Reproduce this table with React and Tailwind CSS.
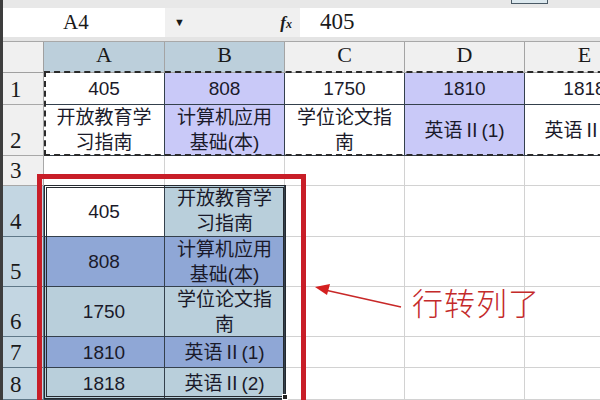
import clsx from 'clsx';

const COLS = ['w-[121px]', 'w-[120px]', 'w-[120px]', 'w-[120px]', 'w-[120px]'];

const LAV = 'bg-[#c9c9f8]';
const PALE = 'bg-[#b9cfdb]';
const BLUE = 'bg-[#8fa7d6]';

const rows = [
  {
    n: '1',
    h: 'h-[32px]',
    head: 'bg-[#f0f0f0]',
    dark: [0, 1, 2, 3, 4],
    cells: [
      { t: '405' },
      { t: '808', bg: LAV },
      { t: '1750' },
      { t: '1810', bg: LAV },
      { t: '1818' },
    ],
  },
  {
    n: '2',
    h: 'h-[51px]',
    head: 'bg-[#f0f0f0]',
    dark: [0, 1, 2, 3, 4],
    cells: [
      { t: ['开放教育学', '习指南'] },
      { t: ['计算机应用', '基础(本)'], bg: LAV },
      { t: ['学位论文指', '南'] },
      { t: '英语Ⅱ(1)', bg: LAV },
      { t: '英语Ⅱ(2)' },
    ],
  },
  { n: '3', h: 'h-[30px]', head: 'bg-[#f0f0f0]', dark: [], cells: [{}, {}, {}, {}, {}] },
  {
    n: '4',
    h: 'h-[51px]',
    head: 'bg-[#c3d6e2]',
    dark: [0, 1],
    cells: [{ t: '405', bg: 'bg-white' }, { t: ['开放教育学', '习指南'], bg: PALE }, {}, {}, {}],
  },
  {
    n: '5',
    h: 'h-[50px]',
    head: 'bg-[#c3d6e2]',
    dark: [0, 1],
    cells: [{ t: '808', bg: BLUE }, { t: ['计算机应用', '基础(本)'], bg: BLUE }, {}, {}, {}],
  },
  {
    n: '6',
    h: 'h-[50px]',
    head: 'bg-[#c3d6e2]',
    dark: [0, 1],
    cells: [{ t: '1750', bg: PALE }, { t: ['学位论文指', '南'], bg: PALE }, {}, {}, {}],
  },
  {
    n: '7',
    h: 'h-[31px]',
    head: 'bg-[#c3d6e2]',
    dark: [0, 1],
    cells: [{ t: '1810', bg: BLUE }, { t: '英语Ⅱ(1)', bg: BLUE }, {}, {}, {}],
  },
  {
    n: '8',
    h: 'h-[32px]',
    head: 'bg-[#c3d6e2]',
    dark: [0, 1],
    cells: [{ t: '1818', bg: PALE }, { t: '英语Ⅱ(2)', bg: PALE }, {}, {}, {}],
  },
];

function Cell({ cell, width, dark }) {
  const text = cell.t;
  return (
    <div
      className={clsx(
        'flex shrink-0 flex-col items-center justify-center border-r border-b text-center text-[19px] leading-[25px] text-[#1a1a2a]',
        width,
        cell.bg || 'bg-white',
        dark ? 'border-[#34404c]' : 'border-[#d2d2d2]'
      )}
    >
      {Array.isArray(text) ? text.map((line) => <span key={line}>{line}</span>) : text}
    </div>
  );
}

export default function App() {
  return (
    <div className="relative h-[400px] w-[600px] overflow-hidden border-l-[3px] border-[#3e3e3e] bg-white font-['Liberation_Sans','Noto_Sans_CJK_SC',sans-serif]">
      {/* formula bar */}
      <div className="relative h-[8px] bg-[#e8e8e8]">
        <div className="absolute left-[508px] top-[-1px] h-[5px] w-[37px] border border-[#4a5a66] bg-[#dce8ee]" />
      </div>
      <div className="flex h-[29px] font-['Liberation_Serif','Noto_Sans_CJK_SC',serif] text-[#1a1a1a]">
        <div className="flex w-[162px] items-center bg-white pl-[60px] text-[21px]">A4</div>
        <div className="flex w-[135px] items-center bg-[#f0f0f0]">
          <span className="ml-[9px] text-[11px]">▼</span>
          <span className="ml-auto mr-[8px] text-[17px] font-bold italic">
            f<span className="text-[12px]">x</span>
          </span>
        </div>
        <div className="flex flex-1 items-center bg-white pl-[20px] text-[23px]">405</div>
      </div>
      <div className="h-[5px] border-b border-[#a8a8a8] bg-[#e4e4e4]" />

      {/* sheet */}
      <div className="w-max">
        <div className="flex h-[31px] font-['Liberation_Serif',serif] text-[22px] text-[#1a1a1a]">
          <div className="w-[41px] shrink-0 border-r border-b border-[#a0a0a0] bg-[#f0f0f0]" />
          {['A', 'B', 'C', 'D', 'E'].map((c, i) => (
            <div
              key={c}
              className={clsx(
                'flex shrink-0 items-end justify-center border-r border-b border-[#a4a4a4] pb-[1px]',
                COLS[i],
                i < 2 ? 'bg-[#bccfdb]' : 'bg-[#f0f0f0]'
              )}
            >
              {c}
            </div>
          ))}
        </div>
        {rows.map((row) => (
          <div key={row.n} className={clsx('flex', row.h)}>
            <div
              className={clsx(
                'flex w-[41px] shrink-0 items-end border-r border-b pb-[1px] pl-[7px] font-["Liberation_Serif",serif] text-[23px] leading-[26px] text-[#1a1a1a]',
                row.head,
                Number(row.n) >= 4 ? 'border-[#5f7888]' : 'border-[#a8a8a8]'
              )}
            >
              {row.n}
            </div>
            {row.cells.map((cell, i) => (
              <Cell key={i} cell={cell} width={COLS[i]} dark={row.dark.includes(i)} />
            ))}
          </div>
        ))}
      </div>

      {/* copy marquee around A1:E2 */}
      <div className="pointer-events-none absolute left-[41px] top-[71px] h-[85px] w-[600px] border-2 border-dashed border-[#2a2a2a]" />

      {/* pasted range outline A4:B8 */}
      <div className="pointer-events-none absolute left-[41px] top-[185px] h-[214px] w-[242px] border-[3px] border-double border-[#252a30]" />
      <div className="absolute left-[279px] top-[394px] h-[6px] w-[6px] border border-white bg-[#222]" />

      {/* red annotation */}
      <div className="pointer-events-none absolute left-[34px] top-[174px] h-[240px] w-[269px] border-[5px] border-[#c81e28]" />
      <svg className="absolute left-[300px] top-[278px]" width="110" height="40" viewBox="0 0 110 40">
        <line x1="98" y1="29" x2="22" y2="12" stroke="#c82828" strokeWidth="1.6" />
        <polygon points="12,9 27,6 24,17" fill="#d42020" />
      </svg>
      <div className="absolute left-[409px] top-[283px] font-['Noto_Sans_CJK_SC',sans-serif] text-[31px] font-light leading-[38px] tracking-[1px] text-[#c42a2a]">
        行转列了
      </div>
    </div>
  );
}
